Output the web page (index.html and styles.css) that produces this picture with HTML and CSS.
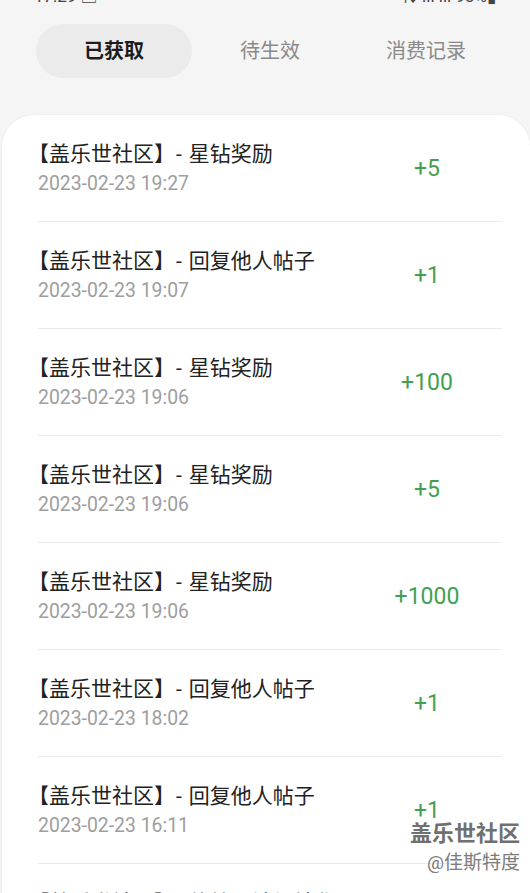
FILE: index.html
```html
<!DOCTYPE html>
<html lang="zh-CN">
<head>
    <meta charset="UTF-8">
    <meta name="viewport" content="width=device-width, initial-scale=1.0">
    <title>星钻记录</title>
    <link rel="stylesheet" href="styles.css">
</head>
<body>
    <div class="status">
        <div class="status-inner">
            <span class="time">17:29 ▣</span>
            <span class="icons">⇅ ıll ıll 93%▮</span>
        </div>
    </div>

    <div class="tabs">
        <div class="tab active">已获取</div>
        <div class="tab">待生效</div>
        <div class="tab">消费记录</div>
    </div>

    <div class="card">
        <div class="row">
            <div class="info">
                <div class="title">【盖乐世社区】<span class="dash">-</span>星钻奖励</div>
                <div class="date">2023-02-23 19:27</div>
            </div>
            <div class="amount">+5</div>
        </div>
        <div class="row">
            <div class="info">
                <div class="title">【盖乐世社区】<span class="dash">-</span>回复他人帖子</div>
                <div class="date">2023-02-23 19:07</div>
            </div>
            <div class="amount">+1</div>
        </div>
        <div class="row">
            <div class="info">
                <div class="title">【盖乐世社区】<span class="dash">-</span>星钻奖励</div>
                <div class="date">2023-02-23 19:06</div>
            </div>
            <div class="amount">+100</div>
        </div>
        <div class="row">
            <div class="info">
                <div class="title">【盖乐世社区】<span class="dash">-</span>星钻奖励</div>
                <div class="date">2023-02-23 19:06</div>
            </div>
            <div class="amount">+5</div>
        </div>
        <div class="row">
            <div class="info">
                <div class="title">【盖乐世社区】<span class="dash">-</span>星钻奖励</div>
                <div class="date">2023-02-23 19:06</div>
            </div>
            <div class="amount">+1000</div>
        </div>
        <div class="row">
            <div class="info">
                <div class="title">【盖乐世社区】<span class="dash">-</span>回复他人帖子</div>
                <div class="date">2023-02-23 18:02</div>
            </div>
            <div class="amount">+1</div>
        </div>
        <div class="row">
            <div class="info">
                <div class="title">【盖乐世社区】<span class="dash">-</span>回复他人帖子</div>
                <div class="date">2023-02-23 16:11</div>
            </div>
            <div class="amount">+1</div>
        </div>
        <div class="row">
            <div class="info">
                <div class="title">【盖乐世社区】<span class="dash">-</span>的帖子被加精华</div>
                <div class="date">2023-02-23 15:40</div>
            </div>
            <div class="amount">+10</div>
        </div>
    </div>

    <div class="watermark">
        <div class="wm-name">盖乐世社区</div>
        <div class="wm-user">@佳斯特度</div>
    </div>
</body>
</html>
```

FILE: styles.css
```css
body {
    margin: 0;
    background-color: #f5f5f5;
    font-family: Roboto, "Noto Sans CJK SC", sans-serif;
    color: #222;
    overflow: hidden;
    height: 893px;
}
.status {
    height: 6px;
    overflow: hidden;
}
.status-inner {
    display: flex;
    justify-content: space-between;
    margin-top: -13px;
    padding: 0 34px;
    font-size: 17px;
    line-height: 18px;
    color: #444;
}
.tabs {
    display: flex;
    padding: 18px 26px 0 36px;
    height: 98px;
    box-sizing: border-box;
}
.tab {
    width: 156px;
    height: 54px;
    line-height: 54px;
    text-align: center;
    font-size: 20px;
    color: #8a8a8a;
    border-radius: 27px;
}
.tab.active {
    background-color: #ebebeb;
    color: #1c1c1c;
    font-weight: bold;
}
.card {
    margin: 11px 0 0 2px;
    background-color: #fff;
    border-radius: 32px 32px 0 0;
    box-shadow: 0 0 2px rgba(0, 0, 0, 0.08);
    padding: 0 28px 0 36px;
}
.row {
    display: flex;
    align-items: center;
    height: 107px;
    box-sizing: border-box;
    border-bottom: 1px solid #ebebeb;
}
.info {
    flex: 1;
    padding-top: 1px;
}
.title {
    font-size: 21px;
    line-height: 28px;
    color: #222;
    margin-left: -10px;
}
.dash {
    margin: 0 7px 0 1px;
}
.date {
    margin-top: 2px;
    font-size: 19.4px;
    line-height: 28px;
    color: #9e9e9e;
    font-family: Roboto, sans-serif;
}
.amount {
    width: 120px;
    margin-right: 15px;
    text-align: center;
    font-size: 23px;
    color: #44a050;
    font-family: Roboto, sans-serif;
}
.watermark {
    position: absolute;
    right: 10px;
    top: 819px;
    text-align: right;
}
.wm-name {
    font-size: 22px;
    font-weight: bold;
    color: #707070;
    line-height: 30px;
    text-shadow: 0 0 2px #fff;
}
.wm-user {
    font-size: 19px;
    color: #7c7c7c;
    line-height: 28px;
}
```
